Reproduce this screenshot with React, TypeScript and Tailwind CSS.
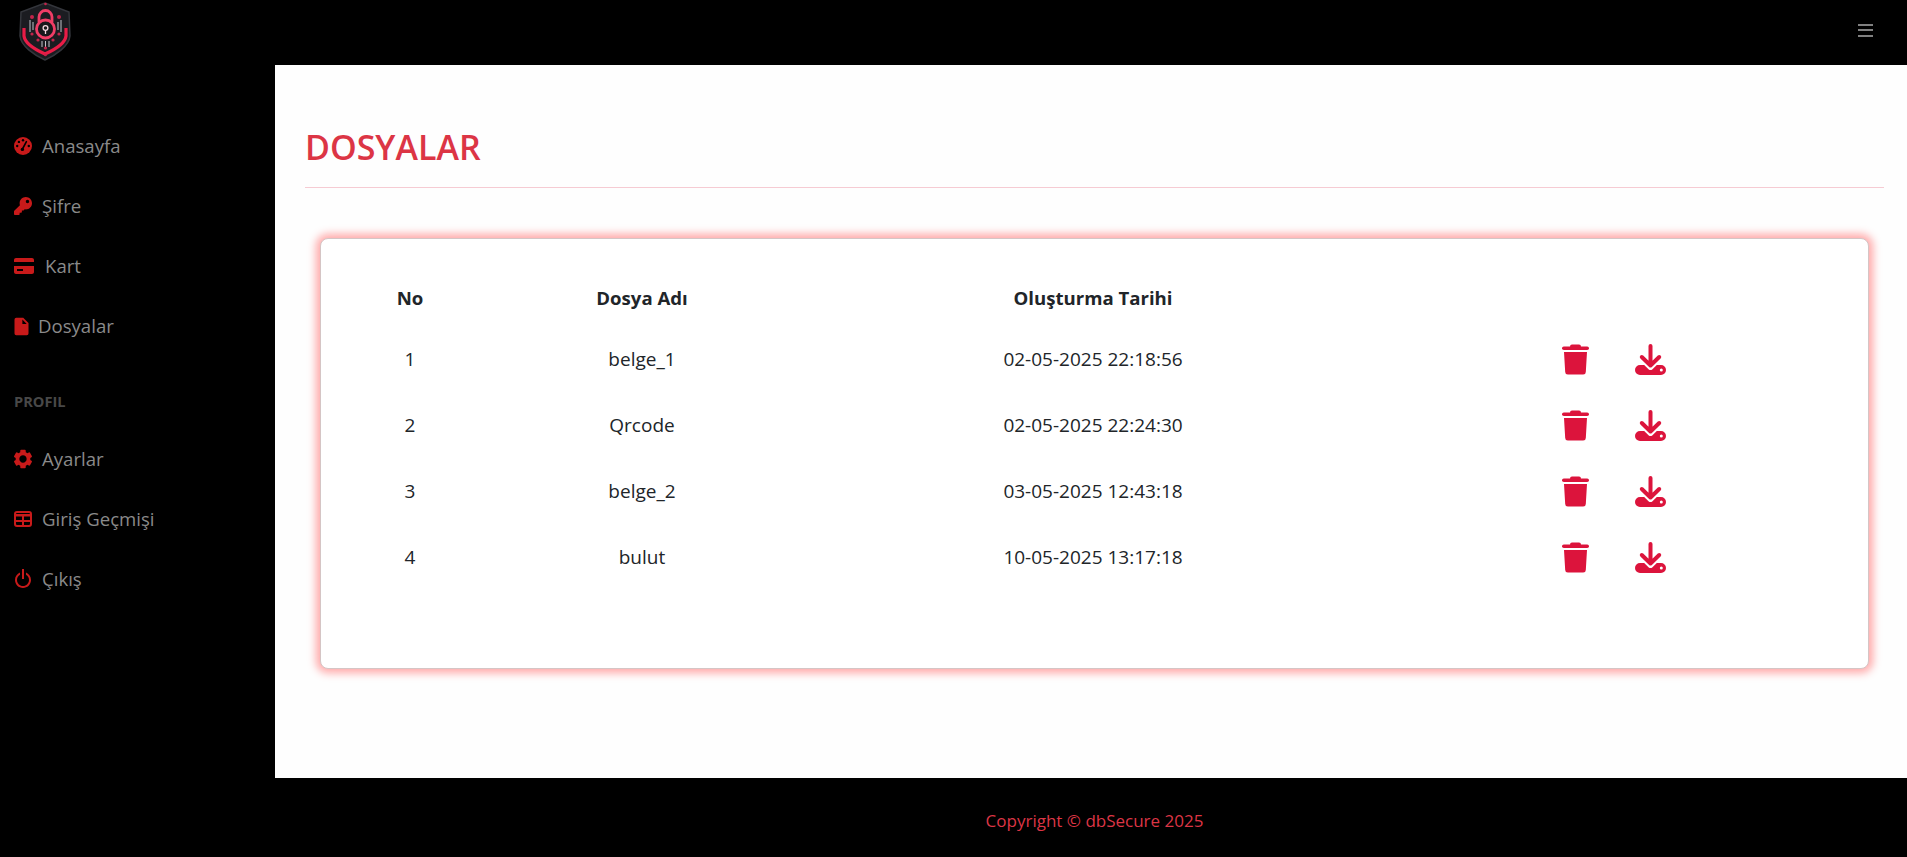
import { BiPowerOff, BiSolidCog, BiSolidCreditCard, BiSolidFileBlank } from "react-icons/bi";
import { FaKey } from "react-icons/fa";

const files = [
  { no: 1, name: "belge_1", date: "02-05-2025 22:18:56" },
  { no: 2, name: "Qrcode", date: "02-05-2025 22:24:30" },
  { no: 3, name: "belge_2", date: "03-05-2025 12:43:18" },
  { no: 4, name: "bulut", date: "10-05-2025 13:17:18" },
];

function Logo() {
  return (
    <svg viewBox="18 0 54 62" className="h-[62px] w-[54px]">
      <path d="M45 3 L69 12 L70 36 C69 46 56 55 45 60 C34 55 21 46 20 36 L21 12 Z" fill="#1b1c21" stroke="#34363c" strokeWidth="1.5" />
      <path d="M24 28 V36 C25 44 36 50 45 54 C54 50 65 44 66 36 V28" fill="none" stroke="#e81c46" strokeWidth="3.2" />
      <path d="M39 22 V17 a6.5 6.5 0 0 1 13 0 V22" fill="none" stroke="#f03d66" strokeWidth="2.8" />
      <circle cx="45.5" cy="29" r="9" fill="#17181c" stroke="#f03d66" strokeWidth="2.8" />
      <circle cx="45.5" cy="28" r="2.4" fill="none" stroke="#f4d7de" strokeWidth="1.3" />
      <path d="M45.5 30 V34" stroke="#f4d7de" strokeWidth="1.3" />
      <path d="M30 20 V32 M33 22 V30 M58 22 V30 M61 20 V32 M42 41 V47 M45.5 41 V47 M49 41 V47" stroke="#d5d7dc" strokeWidth="0.9" />
      <g fill="#c2244a">
        <circle cx="32" cy="17" r="2" />
        <circle cx="59" cy="17" r="2" />
        <circle cx="32" cy="34" r="1.6" />
        <circle cx="59" cy="34" r="1.6" />
        <circle cx="38" cy="40" r="1.6" />
        <circle cx="53" cy="40" r="1.6" />
        <circle cx="45.5" cy="48" r="1.6" />
        <circle cx="45.5" cy="55" r="1.3" />
        <circle cx="45.5" cy="4" r="1.3" />
      </g>
    </svg>
  );
}

function GaugeIcon() {
  return (
    <svg viewBox="0 0 18 18" className="h-[18px] w-[18px]">
      <circle cx="9" cy="9" r="9" fill="currentColor" />
      <g fill="#000">
        <circle cx="9" cy="3.2" r="1.2" />
        <circle cx="4.9" cy="4.9" r="1.2" />
        <circle cx="3.2" cy="9" r="1.2" />
        <circle cx="14.8" cy="9" r="1.2" />
      </g>
      <path d="M8.2 12.5 L12.4 4.6" stroke="#000" strokeWidth="1.6" strokeLinecap="round" />
      <circle cx="8.4" cy="12.4" r="1.7" fill="#000" />
    </svg>
  );
}

function TableIcon() {
  return (
    <svg viewBox="0 0 18 16" fill="none" className="h-[16px] w-[18px]">
      <rect x="1" y="1" width="16" height="14" rx="2" stroke="currentColor" strokeWidth="2" />
      <path d="M1 3 H17 V5.5 H1 Z" fill="currentColor" />
      <path d="M1 10 H17 M9 5 V15" stroke="currentColor" strokeWidth="2" />
    </svg>
  );
}

function TrashIcon() {
  return (
    <svg viewBox="0 0 27 31" fill="currentColor" className="h-[31px] w-[27px] shrink-0">
      <rect x="8" y="0.5" width="11" height="4" rx="2" />
      <rect x="0" y="2.5" width="27" height="3.6" rx="1.8" />
      <path d="M2 8 H25 L23.8 28 a2.6 2.6 0 0 1 -2.6 2.5 H5.8 a2.6 2.6 0 0 1 -2.6 -2.5 Z" />
    </svg>
  );
}

function DownloadIcon() {
  return (
    <svg viewBox="0 0 31 31" fill="currentColor" className="h-[31px] w-[31px] shrink-0">
      <path d="M15.5 2 V20 M6.8 13 L15.5 21.5 L24.2 13" fill="none" stroke="currentColor" strokeWidth="4" strokeLinecap="round" strokeLinejoin="round" />
      <path d="M5 21 H9.2 L13.5 25.2 a3 3 0 0 0 4 0 L21.8 21 H26 a5 5 0 0 1 0 10 H5 a5 5 0 0 1 0 -10 Z" />
      <circle cx="26.3" cy="26" r="1.5" fill="#fff" />
    </svg>
  );
}

function NavItem({ icon, label, gap }: { icon: React.ReactNode; label: string; gap: string }) {
  return (
    <a className={`flex h-[60px] items-center pl-[14px] text-[18.6px] text-[#8a8a8a] ${gap}`}>
      <span className="text-[#c81a1a]">{icon}</span>
      {label}
    </a>
  );
}

export default function App() {
  return (
    <div className="flex min-h-[857px] flex-col bg-black font-['Open_Sans','Noto_Sans',sans-serif]">
      <header className="flex h-[65px] items-start justify-between">
        <div className="pl-[18px]">
          <Logo />
        </div>
        <div className="mr-[34px] mt-[24px] flex w-[15px] flex-col gap-[3.4px]">
          <div className="h-[2px] bg-[#808080]" />
          <div className="h-[2px] bg-[#808080]" />
          <div className="h-[2px] bg-[#808080]" />
        </div>
      </header>

      <div className="flex flex-1">
        <aside className="w-[275px] shrink-0 pt-[51px]">
          <NavItem icon={<GaugeIcon />} label="Anasayfa" gap="gap-[10px]" />
          <NavItem icon={<FaKey className="h-[18px] w-[18px]" />} label="Şifre" gap="gap-[10px]" />
          <NavItem icon={<BiSolidCreditCard className="-mx-[2px] h-[24px] w-[24px]" />} label="Kart" gap="gap-[11px]" />
          <NavItem icon={<BiSolidFileBlank className="-mx-[3.5px] h-[21px] w-[21px]" />} label="Dosyalar" gap="gap-[10px]" />
          <div className="pb-[19px] pl-[14px] pt-[36px] text-[14.6px] font-bold leading-[18px] text-[#484848]">PROFIL</div>
          <NavItem icon={<BiSolidCog className="-mx-[2px] h-[22px] w-[22px]" />} label="Ayarlar" gap="gap-[10px]" />
          <NavItem icon={<TableIcon />} label="Giriş Geçmişi" gap="gap-[10px]" />
          <NavItem icon={<BiPowerOff className="-mx-[3px] h-[24px] w-[24px]" />} label="Çıkış" gap="gap-[10px]" />
        </aside>

        <main className="flex h-[713px] flex-1 flex-col bg-[#fefefe] pl-[30px] pr-[23px]">
          <h1 className="mt-[56px] text-[34px] font-semibold leading-[52px] text-[#dc3545]">DOSYALAR</h1>
          <hr className="mt-[14px] border-[#f6cbd3]" />
          <section className="ml-[15px] mr-[15px] mt-[50px] h-[431px] rounded-[8px] border border-[#d5c5c5] bg-white px-[30px] pt-[30px] shadow-[0_0_8px_4px_#ffa8a8]">
            <table className="w-full table-fixed text-center text-[19px] text-[#212529]">
              <thead>
                <tr className="h-[57px] text-[18.6px]">
                  <th className="w-[118px] font-bold">No</th>
                  <th className="w-[346px] font-bold">Dosya Adı</th>
                  <th className="w-[556px] font-bold">Oluşturma Tarihi</th>
                  <th />
                </tr>
              </thead>
              <tbody>
                {files.map((f) => (
                  <tr key={f.no} className="h-[66px]">
                    <td>{f.no}</td>
                    <td>{f.name}</td>
                    <td>{f.date}</td>
                    <td>
                      <div className="ml-[191px] flex items-center gap-[46px] text-[#dc143c]">
                        <TrashIcon />
                        <DownloadIcon />
                      </div>
                    </td>
                  </tr>
                ))}
              </tbody>
            </table>
          </section>
        </main>
      </div>

      <footer className="flex h-[79px] items-center justify-center pl-[282px] pt-[7px] text-[17px] text-[#dc3545]">
        Copyright © dbSecure 2025
      </footer>
    </div>
  );
}
